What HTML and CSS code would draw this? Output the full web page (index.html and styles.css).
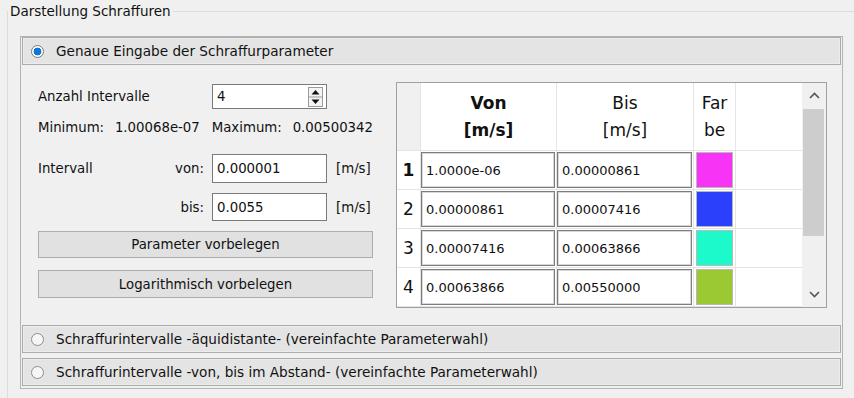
FILE: index.html
```html
<!DOCTYPE html>
<html>
<head>
<meta charset="UTF-8">
<title>Darstellung Schraffuren</title>
<link rel="stylesheet" href="styles.css">
</head>
<body>

<fieldset class="group">
  <legend>Darstellung Schraffuren</legend>

  <div class="box">
    <div class="bar"><span class="radio on"></span>Genaue Eingabe der Schraffurparameter</div>

    <div class="panel">
      <div class="left">
        <span class="lbl wide">Anzahl Intervalle</span>
        <div class="spin">
          <span>4</span>
          <svg class="arrows" width="15" height="20" viewBox="0 0 15 20">
            <rect x="0.5" y="0.5" width="14" height="19" fill="#f4f4f4" stroke="#9a9a9a"/>
            <line x1="1" y1="10" x2="14" y2="10" stroke="#9a9a9a"/>
            <polygon points="3.5,7.5 11.5,7.5 7.5,3" fill="#111"/>
            <polygon points="3.5,12.5 11.5,12.5 7.5,17" fill="#111"/>
          </svg>
        </div>

        <div class="minmax">
          <span class="mm-k">Minimum:</span><span class="mm-v">1.00068e-07</span>
          <span class="mm-k2">Maximum:</span><span class="mm-v2">0.00500342</span>
        </div>

        <span class="lbl r-von">Intervall</span>
        <span class="key r-von">von:</span>
        <div class="edit r-von">0.000001</div>
        <span class="unit r-von">[m/s]</span>

        <span class="key r-bis">bis:</span>
        <div class="edit r-bis">0.0055</div>
        <span class="unit r-bis">[m/s]</span>

        <div class="btn b1">Parameter vorbelegen</div>
        <div class="btn b2">Logarithmisch vorbelegen</div>
      </div>

      <div class="table">
        <div class="corner"></div>
        <div class="head"><b>Von<br>[m/s]</b></div>
        <div class="head">Bis<br>[m/s]</div>
        <div class="head">Far<br>be</div>
        <div class="head empty"></div>

        <div class="scroll">
          <div class="sbtn">
            <svg width="11" height="7" viewBox="0 0 11 7"><polyline points="1,6 5.5,1.5 10,6" fill="none" stroke="#555" stroke-width="1.6"/></svg>
          </div>
          <div class="thumb"></div>
          <div class="track"></div>
          <div class="sbtn">
            <svg width="11" height="7" viewBox="0 0 11 7"><polyline points="1,1 5.5,5.5 10,1" fill="none" stroke="#555" stroke-width="1.6"/></svg>
          </div>
        </div>

        <div class="num"><b>1</b></div>
        <div class="cell"><div class="cedit">1.0000e-06</div></div>
        <div class="cell"><div class="cedit">0.00000861</div></div>
        <div class="cell"><div class="swatch" style="background:#f733f5"></div></div>
        <div class="cell blank"></div>

        <div class="num">2</div>
        <div class="cell"><div class="cedit">0.00000861</div></div>
        <div class="cell"><div class="cedit">0.00007416</div></div>
        <div class="cell"><div class="swatch" style="background:#2a40fb"></div></div>
        <div class="cell blank"></div>

        <div class="num">3</div>
        <div class="cell"><div class="cedit">0.00007416</div></div>
        <div class="cell"><div class="cedit">0.00063866</div></div>
        <div class="cell"><div class="swatch" style="background:#1cfac9"></div></div>
        <div class="cell blank"></div>

        <div class="num">4</div>
        <div class="cell"><div class="cedit">0.00063866</div></div>
        <div class="cell"><div class="cedit">0.00550000</div></div>
        <div class="cell"><div class="swatch" style="background:#9bc932"></div></div>
        <div class="cell blank"></div>
      </div>
    </div>

    <div class="bar"><span class="radio"></span>Schraffurintervalle -äquidistante- (vereinfachte Parameterwahl)</div>
    <div class="bar last"><span class="radio"></span>Schraffurintervalle -von, bis im Abstand- (vereinfachte Parameterwahl)</div>
  </div>
</fieldset>

</body>
</html>
```

FILE: styles.css
```css
body {
  margin: 0;
  background-color: #f0f0f0;
  font-family: "DejaVu Sans", sans-serif;
  font-size: 13.3px;
  color: #111;
  overflow: hidden;
  width: 854px;
  height: 398px;
}

.group {
  margin: 2px 0 0 7px;
  padding: 0 0 12px 0;
  width: 880px;
  border: 1px solid #dcdcdc;
  min-width: 0;
}

.group legend {
  margin-left: 0;
  padding: 0 2px;
  line-height: 18px;
  font-size: 13.5px;
}

.box {
  margin: 16px 0 0 12px;
  width: 819px;
  border: 1px solid #b4b4b4;
  padding: 0 1px 2px 1px;
}

.bar {
  height: 26px;
  display: flex;
  align-items: center;
  background-color: #e4e4e4;
  border: 1px solid #acacac;
  box-shadow: inset 0 0 0 1px #ececec;
  font-size: 13.6px;
}
.bar.last {
  margin-top: 5px;
}

.radio {
  width: 11px;
  height: 11px;
  border: 1px solid #8d8d8d;
  border-radius: 50%;
  background-color: #f6f6f6;
  margin: 0 12px 0 8px;
  flex: none;
}
.radio.on {
  background: radial-gradient(circle, #0a78d7 0, #0a78d7 3.6px, #fff 4.2px);
  border-color: #7a7a7a;
}

.panel {
  height: 260px;
  display: flex;
  align-items: flex-start;
}

/* rows: spin, gap, minmax, gap, von, gap, bis, gap, btn, gap, btn */
.left {
  margin: 19px 0 0 16px;
  display: grid;
  grid-template-columns: 110px 56px 123px 46px;
  grid-template-rows: 25px 10px 18px 17px 29px 10px 28px 10px 27px 12px 28px;
  align-items: center;
}

.lbl.wide {
  grid-column: 1 / 3;
  grid-row: 1;
}

.spin {
  grid-column: 3;
  grid-row: 1;
  margin-left: 8px;
  height: 25px;
  box-sizing: border-box;
  border: 1px solid #7a7a7a;
  background-color: #fff;
  display: flex;
  align-items: center;
  justify-content: space-between;
  padding: 0 3px 0 4px;
}

.minmax {
  grid-column: 1 / 5;
  grid-row: 3;
  line-height: 18px;
  display: flex;
}
.mm-k { width: 77px; }
.mm-v { width: 97px; }
.mm-k2 { width: 81px; }

.r-von { grid-row: 5; }
.r-bis { grid-row: 7; }

.key {
  grid-column: 2;
  text-align: right;
}

.edit {
  grid-column: 3;
  margin-left: 8px;
  height: 100%;
  box-sizing: border-box;
  border: 1px solid #7a7a7a;
  background-color: #fff;
  padding: 0 4px;
  display: flex;
  align-items: center;
}

.unit {
  grid-column: 4;
  padding-left: 9px;
}

.btn {
  grid-column: 1 / 5;
  height: 100%;
  box-sizing: border-box;
  background-color: #e1e1e1;
  border: 1px solid #adadad;
  display: flex;
  align-items: center;
  justify-content: center;
}
.b1 { grid-row: 9; }
.b2 { grid-row: 11; }

.table {
  margin: 17px 0 0 23px;
  width: 429px;
  height: 224px;
  border: 1px solid #a0a0a0;
  background-color: #fff;
  display: grid;
  grid-template-columns: 23px 136px 137px 42px 67px 24px;
  grid-template-rows: 68px repeat(4, 39px);
  overflow: hidden;
}

.corner {
  background-color: #f0f0f0;
  border-bottom: 1px solid #e4e4e4;
}

.head {
  border-left: 1px solid #e4e4e4;
  border-bottom: 1px solid #e4e4e4;
  display: flex;
  align-items: center;
  justify-content: center;
  text-align: center;
  font-size: 17px;
  line-height: 27px;
}

.scroll {
  grid-column: 6;
  grid-row: 1 / 6;
  background-color: #f0f0f0;
  display: flex;
  flex-direction: column;
}
.sbtn {
  height: 25px;
  display: flex;
  align-items: center;
  justify-content: center;
}
.thumb {
  height: 127px;
  margin: 1px 2px 0 1px;
  background-color: #cdcdcd;
}
.track {
  flex: 1;
}

.num {
  display: flex;
  align-items: center;
  justify-content: center;
  font-size: 17px;
  border-bottom: 1px solid #e4e4e4;
}

.cell {
  border-left: 1px solid #e4e4e4;
  border-bottom: 1px solid #e4e4e4;
  padding: 1px 1px 0 0;
}
.cell.blank {
  padding: 0;
}

.cedit {
  height: 36px;
  box-sizing: border-box;
  border: 1px solid #7d7d7d;
  box-shadow: inset 0 0 0 1px #d8d8d8;
  background-color: #fff;
  padding: 0 4px;
  display: flex;
  align-items: center;
  font-size: 13px;
}

.swatch {
  margin: 0 1px 0 2px;
  height: 36px;
  box-sizing: border-box;
  border: 1px solid #b8b8b8;
}
```
